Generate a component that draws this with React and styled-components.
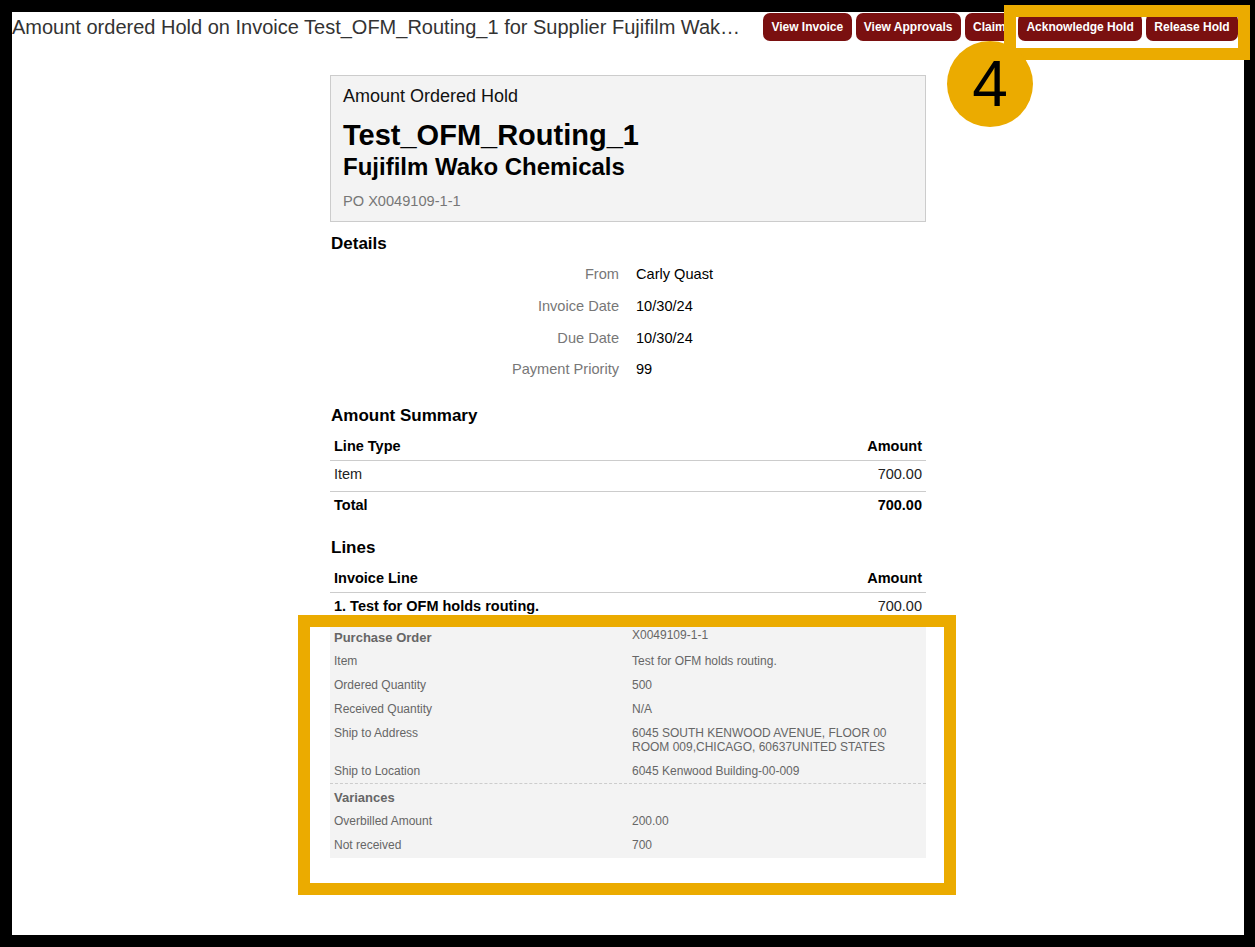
import React from "react";
import styled, { createGlobalStyle } from "styled-components";

const GlobalStyle = createGlobalStyle`
  html, body {
    margin: 0;
    padding: 0;
    background: #000;
  }
  body {
    font-family: "Liberation Sans", Arial, sans-serif;
  }
`;

const ANNOTATION = "#ebab00";
const BUTTON = "#7a1010";

const details = [
  ["From", "Carly Quast"],
  ["Invoice Date", "10/30/24"],
  ["Due Date", "10/30/24"],
  ["Payment Priority", "99"],
];

const lineInfo = [
  ["Item", "Test for OFM holds routing."],
  ["Ordered Quantity", "500"],
  ["Received Quantity", "N/A"],
  [
    "Ship to Address",
    "6045 SOUTH KENWOOD AVENUE, FLOOR 00\nROOM 009,CHICAGO, 60637UNITED STATES",
  ],
  ["Ship to Location", "6045 Kenwood Building-00-009"],
];

const variances = [
  ["Overbilled Amount", "200.00"],
  ["Not received", "700"],
];

const Screen = styled.div`
  position: relative;
  width: 1255px;
  height: 947px;
  box-sizing: border-box;
  padding: 12px 11px 12px 12px;
  overflow: hidden;
`;

const Page = styled.div`
  height: 100%;
  background: #fff;
  overflow: hidden;
`;

const TopBar = styled.header`
  display: flex;
  align-items: center;
  padding: 1px 6px 0 0;
`;

const PageTitle = styled.h1`
  flex: 1;
  min-width: 0;
  margin: 0 22px 0 0;
  font-size: 20px;
  font-weight: 400;
  line-height: 28px;
  color: #333;
  white-space: nowrap;
  overflow: hidden;
  text-overflow: ellipsis;
`;

const Actions = styled.div`
  display: flex;
  gap: 4px;
  flex-shrink: 0;
`;

const ActionButton = styled.button`
  height: 28px;
  padding: 0 8.3px;
  border: none;
  border-radius: 7px;
  background: ${BUTTON};
  color: #fff;
  font-family: inherit;
  font-size: 12px;
  font-weight: 700;
  cursor: pointer;
`;

const Column = styled.main`
  width: 596px;
  margin: 34px auto 0;
`;

const HoldCard = styled.section`
  border: 1px solid #ccc;
  background: #f3f3f3;
  padding: 9px 12px 10px;
`;

const HoldType = styled.div`
  font-size: 18px;
  line-height: 22px;
  color: #111;
`;

const InvoiceNumber = styled.div`
  margin-top: 11px;
  font-size: 29px;
  font-weight: 700;
  line-height: 34px;
  color: #000;
`;

const Supplier = styled.div`
  margin-top: 1px;
  font-size: 24px;
  font-weight: 700;
  line-height: 28px;
  color: #000;
`;

const PoNumber = styled.div`
  margin-top: 10px;
  font-size: 14.6px;
  line-height: 20px;
  color: #777;
`;

const SectionTitle = styled.h2`
  margin: ${(p) => p.$gap}px 0 0 1px;
  font-size: 17px;
  font-weight: 700;
  line-height: 22px;
  color: #000;
`;

const DetailList = styled.dl`
  margin: 4px 0 0;
  display: grid;
  grid-template-columns: 1fr 1fr;
`;

const DetailLabel = styled.dt`
  padding-right: 9px;
  text-align: right;
  font-size: 14.6px;
  line-height: 31.8px;
  color: #777;
`;

const DetailValue = styled.dd`
  margin: 0;
  padding-left: 8px;
  font-size: 14.6px;
  line-height: 31.8px;
  color: #000;
`;

const Table = styled.table`
  width: 100%;
  margin-top: 6px;
  border-collapse: collapse;
  font-size: 14.5px;
`;

const Cell = styled.td`
  padding: ${(p) => (p.$head ? "3px 4px 4px" : "3px 4px 7px")};
  line-height: 20px;
  text-align: ${(p) => (p.$right ? "right" : "left")};
  font-weight: ${(p) => (p.$bold ? 700 : 400)};
  color: ${(p) => (p.$bold ? "#000" : "#222")};
  border-bottom: ${(p) => (p.$ruled ? "1px solid #ccc" : "none")};
`;

const HeadCell = styled(Cell).attrs({ as: "th", $head: true, $bold: true, $ruled: true })``;

const LineDetail = styled.div`
  background: #f3f3f3;
  padding-top: 2px;
  font-size: 12px;
  color: #666;
`;

const InfoGroup = styled.div`
  padding: ${(p) => (p.$dashed ? "0" : "1px 0")};
  border-bottom: ${(p) => (p.$dashed ? "1px dashed #ccc" : "none")};
`;

const InfoRow = styled.div`
  display: grid;
  grid-template-columns: 1fr 1fr;
  line-height: 14px;
`;

const InfoLabel = styled.div`
  padding: ${(p) => (p.$heading ? "6px 4px 4px" : "5px 4px")};
  font-size: ${(p) => (p.$heading ? "13px" : "12px")};
  font-weight: ${(p) => (p.$heading ? 700 : 400)};
`;

const InfoValue = styled.div`
  padding: 5px 4px;
  padding-top: ${(p) => (p.$raised ? 3 : 5)}px;
  white-space: pre-line;
`;

const Highlight = styled.div`
  position: absolute;
  left: ${(p) => p.$x}px;
  top: ${(p) => p.$y}px;
  width: ${(p) => p.$w}px;
  height: ${(p) => p.$h}px;
  box-sizing: border-box;
  border: 12px solid ${ANNOTATION};
  pointer-events: none;
`;

const StepBadge = styled.div`
  position: absolute;
  left: 947px;
  top: 41px;
  width: 86px;
  height: 86px;
  border-radius: 50%;
  background: ${ANNOTATION};
  display: flex;
  align-items: center;
  justify-content: center;
  font-size: 64px;
  line-height: 1;
  color: #000;
`;

export default function App() {
  return (
    <>
      <GlobalStyle />
      <Screen>
        <Page>
          <TopBar>
            <PageTitle>
              Amount ordered Hold on Invoice Test_OFM_Routing_1 for Supplier
              Fujifilm Wako Chemicals
            </PageTitle>
            <Actions>
              <ActionButton>View Invoice</ActionButton>
              <ActionButton>View Approvals</ActionButton>
              <ActionButton>Claim</ActionButton>
              <ActionButton>Acknowledge Hold</ActionButton>
              <ActionButton>Release Hold</ActionButton>
            </Actions>
          </TopBar>

          <Column>
            <HoldCard>
              <HoldType>Amount Ordered Hold</HoldType>
              <InvoiceNumber>Test_OFM_Routing_1</InvoiceNumber>
              <Supplier>Fujifilm Wako Chemicals</Supplier>
              <PoNumber>PO X0049109-1-1</PoNumber>
            </HoldCard>

            <SectionTitle $gap={11}>Details</SectionTitle>
            <DetailList>
              {details.map(([label, value]) => (
                <React.Fragment key={label}>
                  <DetailLabel>{label}</DetailLabel>
                  <DetailValue>{value}</DetailValue>
                </React.Fragment>
              ))}
            </DetailList>

            <SectionTitle $gap={19}>Amount Summary</SectionTitle>
            <Table>
              <thead>
                <tr>
                  <HeadCell>Line Type</HeadCell>
                  <HeadCell $right>Amount</HeadCell>
                </tr>
              </thead>
              <tbody>
                <tr>
                  <Cell $ruled>Item</Cell>
                  <Cell $ruled $right>700.00</Cell>
                </tr>
                <tr>
                  <Cell $bold>Total</Cell>
                  <Cell $bold $right>700.00</Cell>
                </tr>
              </tbody>
            </Table>

            <SectionTitle $gap={15}>Lines</SectionTitle>
            <Table>
              <thead>
                <tr>
                  <HeadCell>Invoice Line</HeadCell>
                  <HeadCell $right>Amount</HeadCell>
                </tr>
              </thead>
              <tbody>
                <tr>
                  <Cell $bold>1. Test for OFM holds routing.</Cell>
                  <Cell $right>700.00</Cell>
                </tr>
              </tbody>
            </Table>

            <LineDetail>
              <InfoGroup $dashed>
                <InfoRow>
                  <InfoLabel $heading>Purchase Order</InfoLabel>
                  <InfoValue $raised>X0049109-1-1</InfoValue>
                </InfoRow>
                {lineInfo.map(([label, value]) => (
                  <InfoRow key={label}>
                    <InfoLabel>{label}</InfoLabel>
                    <InfoValue>{value}</InfoValue>
                  </InfoRow>
                ))}
              </InfoGroup>
              <InfoGroup>
                <InfoRow>
                  <InfoLabel $heading>Variances</InfoLabel>
                </InfoRow>
                {variances.map(([label, value]) => (
                  <InfoRow key={label}>
                    <InfoLabel>{label}</InfoLabel>
                    <InfoValue>{value}</InfoValue>
                  </InfoRow>
                ))}
              </InfoGroup>
            </LineDetail>
          </Column>
        </Page>

        <Highlight $x={1004} $y={5} $w={246} $h={55} />
        <StepBadge>4</StepBadge>
        <Highlight $x={298} $y={615} $w={658} $h={280} />
      </Screen>
    </>
  );
}
